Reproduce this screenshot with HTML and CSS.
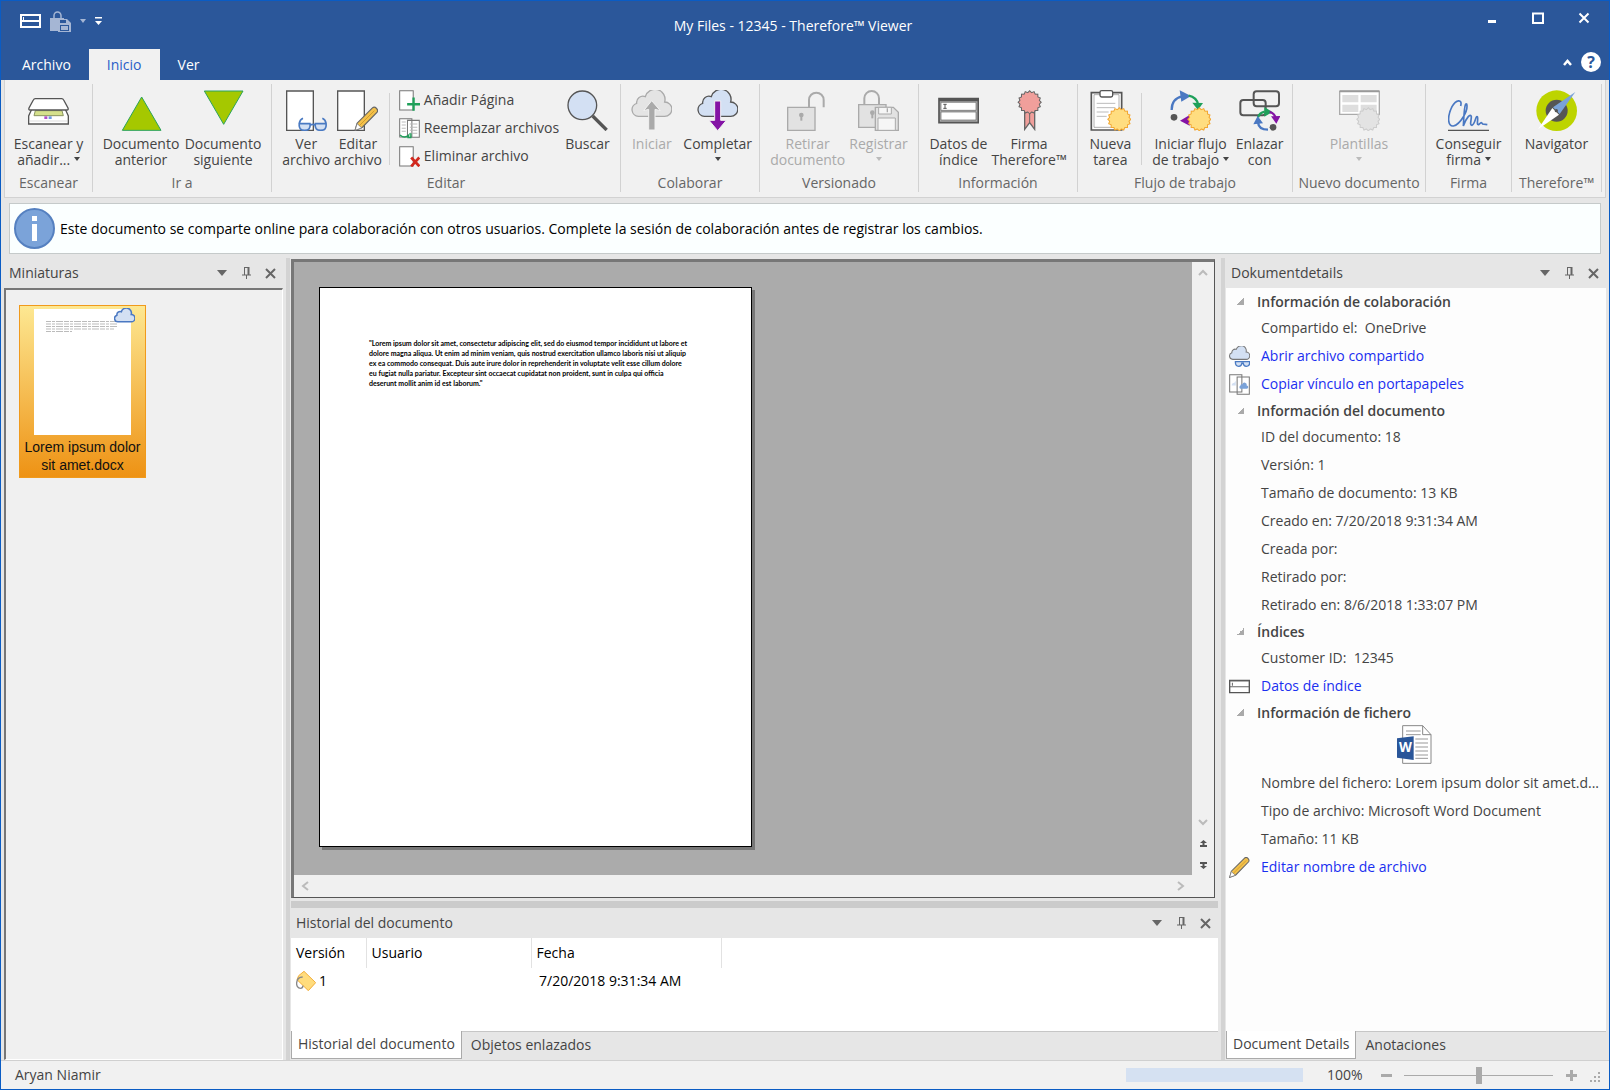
FILE: index.html
```
<!DOCTYPE html>
<html lang="es">

<head>
    <meta charset="UTF-8">
    <meta name="viewport" content="width=device-width, initial-scale=1.0">
    <title>My Files - 12345 - Therefore™ Viewer</title>

    <link rel="stylesheet" href="styles.css">
</head>

<body>
    <!-- Shared icon shapes -->
    <svg class="defs" aria-hidden="true">
        <defs>
            <g id="burst">
                <rect x="-23" y="-23" width="46" height="46" />
                <rect x="-23" y="-23" width="46" height="46" transform="rotate(22.5)" />
                <rect x="-23" y="-23" width="46" height="46" transform="rotate(45)" />
                <rect x="-23" y="-23" width="46" height="46" transform="rotate(67.5)" />
            </g>
            <path id="cloud" d="M22 79A20 20 0 0 1 17 40A19 19 0 0 1 43 20A30 30 0 0 1 101 36A21 21 0 0 1 101 79Z" />
            <g id="pencil">
                <path d="M2 60l5-18L46 3q5-4 10 1t2 10L20 53z" fill="#f3c14b" stroke="#666" stroke-width="3" />
                <path d="M2 60l5-17 12 11z" fill="#fff" stroke="#777" stroke-width="2" />
                <path d="M13 48L51 10" stroke="#c99322" stroke-width="2" />
            </g>
            <g id="pin" fill="none" stroke="#666">
                <path d="M3.500 0v8M3 .500h5M1 8h9M5.500 8v4" />
                <path d="M7.500 0v8" stroke-width="2" />
            </g>
            <path id="cross" d="M1 1l9 9M10 1l-9 9" fill="none" stroke="#666" stroke-width="2" />
        </defs>
    </svg>

    <header class="titlebar">
        <div class="title-row">
            <div class="quick-access">
                <button class="plain" aria-label="Datos de índice">
                    <svg width="21" height="14" viewBox="0 0 21 14" fill="none" stroke="#fff">
                        <path d="M1 1h19v12H1zM1 7h19" stroke-width="2" />
                        <path d="M3.500 3v3" />
                    </svg>
                </button>
                <button class="plain" aria-label="Registrar">
                    <svg width="21" height="21" viewBox="0 0 21 21" fill="#a5b6d4">
                        <path d="M4 7V4.500a3.500 3.500 0 0 1 7 0V7" fill="none" stroke="#a5b6d4" stroke-width="1.500" />
                        <path d="M0 7h14v2H8v11H0z" />
                        <path d="M8 8h9l4 4v9H8z" />
                        <path d="M10 9h6v3h-6zM10 14h9v6h-9z" fill="#2b579a" />
                        <path d="M11 15h7v4h-7z" />
                    </svg>
                </button>
                <button class="plain" aria-label="Opciones de registro"><span class="caret pale"></span></button>
                <button class="plain" aria-label="Personalizar barra">
                    <svg width="7" height="8" viewBox="0 0 7 8" fill="#fff">
                        <path d="M0 0h7v1.500H0zM0 4h7L3.500 8z" />
                    </svg>
                </button>
            </div>
            <h1>My Files - 12345 - Therefore™ Viewer</h1>
            <div class="window-buttons">
                <button class="plain" aria-label="Minimizar">
                    <svg width="12" height="12" viewBox="0 0 12 12"><path d="M2 8h8v3H2z" fill="#fff" /></svg>
                </button>
                <button class="plain" aria-label="Maximizar">
                    <svg width="12" height="12" viewBox="0 0 12 12"><path d="M1 1.500h10v9.500H1z" fill="none" stroke="#fff" stroke-width="2" /></svg>
                </button>
                <button class="plain" aria-label="Cerrar">
                    <svg width="12" height="12" viewBox="0 0 12 12"><path d="M1.500 1.500l9 9M10.500 1.500l-9 9" stroke="#fff" stroke-width="2" /></svg>
                </button>
            </div>
        </div>
        <nav class="ribbon-tabs">
            <button>Archivo</button>
            <button class="active">Inicio</button>
            <button>Ver</button>
            <div class="ribbon-help">
                <button class="plain" aria-label="Contraer cinta">
                    <svg width="9" height="7" viewBox="0 0 9 7"><path d="M1 6l3.500-4L8 6" fill="none" stroke="#fff" stroke-width="2.500" /></svg>
                </button>
                <button class="help">?</button>
            </div>
        </nav>
    </header>

    <section class="ribbon">
        <div class="group group-scan">
            <div class="group-body">
                <button class="tool">
                    <svg viewBox="0 0 123 123" fill="#fff" stroke="#555" stroke-width="4">
                        <path d="M11 58L2 78v24h119V78l-9-20z" />
                        <path d="M22 62h80l4 15H18z" fill="#d5e08c" stroke="#8a9460" stroke-width="3" />
                        <path d="M22 26h79q4 0 6 4l13 24q2 6-3 6H6q-5 0-3-6l13-24q2-4 6-4z" />
                        <path d="M3 93h117" stroke="#ccc" stroke-width="2" />
                        <path d="M49 79h9v8h-9z" fill="#b04cc8" stroke="none" />
                        <path d="M62 79h9v8h-9z" fill="#6d9be0" stroke="none" />
                    </svg>
                    <span>Escanear y<br>añadir... <i class="caret"></i></span>
                </button>
            </div>
            <h2>Escanear</h2>
        </div>

        <div class="group group-goto">
            <div class="group-body">
                <button class="tool wide">
                    <svg viewBox="0 0 123 123"><path d="M62 21l58 100H4z" fill="#a5c800" stroke="#2ba35c" stroke-width="3" /></svg>
                    <span>Documento<br>anterior</span>
                </button>
                <button class="tool wide">
                    <svg viewBox="0 0 123 123"><path d="M62 103L4 3h116z" fill="#a5c800" stroke="#2ba35c" stroke-width="3" /></svg>
                    <span>Documento<br>siguiente</span>
                </button>
            </div>
            <h2>Ir a</h2>
        </div>

        <div class="group group-edit">
            <div class="group-body">
                <button class="tool">
                    <svg viewBox="0 0 123 123">
                        <path d="M2 3h80v118H2z" fill="#fff" stroke="#555" stroke-width="4" />
                        <g fill="#d3e0f3" stroke="#4a7ac2" stroke-width="5">
                            <path d="M51 85q-10 4-11 16M109 85q10 4 11 16M73 105q7-4 14 0" fill="none" />
                            <path d="M40 101h32q3 20-16 20t-16-20zM88 101h32q3 20-16 20t-16-20z" />
                        </g>
                    </svg>
                    <span>Ver<br>archivo</span>
                </button>
                <button class="tool">
                    <svg viewBox="0 0 123 123">
                        <path d="M2 3h80v118H2z" fill="#fff" stroke="#555" stroke-width="4" />
                        <use href="#pencil" transform="translate(52 50) scale(1.18)" />
                    </svg>
                    <span>Editar<br>archivo</span>
                </button>
                <div class="tool-separator"></div>
                <div class="tool-list">
                    <button>
                        <svg viewBox="0 0 62 62">
                            <path d="M2 2h40v57H2z" fill="#fff" stroke="#777" stroke-width="3" />
                            <path d="M43 22v39M24 42h38" stroke="#1fa05a" stroke-width="7" />
                        </svg>
                        Añadir Página
                    </button>
                    <button>
                        <svg viewBox="0 0 62 62">
                            <path d="M2 2h36v54H2zM25 7h35v50H25z" fill="#fff" stroke="#777" stroke-width="3" />
                            <path d="M8 12h12M8 21h12M8 30h12M8 39h12M32 18h22M32 27h22M32 36h22M32 45h22" stroke="#bbb" stroke-width="3" />
                            <path d="M3 50q14 12 26 0l-2 8h8V45" fill="none" stroke="#1fa05a" stroke-width="4" />
                        </svg>
                        Reemplazar archivos
                    </button>
                    <button>
                        <svg viewBox="0 0 62 62">
                            <path d="M2 2h40v57H2z" fill="#fff" stroke="#777" stroke-width="3" />
                            <path d="M36 34l24 26M60 34L36 60" stroke="#d2281e" stroke-width="8" />
                        </svg>
                        Eliminar archivo
                    </button>
                </div>
                <button class="tool">
                    <svg viewBox="0 0 123 123">
                        <path d="M77 78l42 42" stroke="#555" stroke-width="10" />
                        <circle cx="46" cy="46" r="43" fill="#d3e0f3" stroke="#555" stroke-width="4" />
                    </svg>
                    <span>Buscar</span>
                </button>
            </div>
            <h2>Editar</h2>
        </div>

        <div class="group group-share">
            <div class="group-body">
                <button class="tool" disabled>
                    <svg viewBox="0 0 123 123">
                        <use href="#cloud" fill="#e4e4e4" stroke="#aaa" stroke-width="4" />
                        <path d="M62 32l26 30-16-4v62H53V58l-15 4z" fill="#aaa" stroke="#f1f1f1" stroke-width="3" />
                    </svg>
                    <span>Iniciar</span>
                </button>
                <button class="tool">
                    <svg viewBox="0 0 123 123">
                        <use href="#cloud" fill="#d3e0f3" stroke="#555" stroke-width="4" />
                        <path d="M53 33h18v58h17l-26 31-26-31h17z" fill="#8413a5" stroke="#f1f1f1" stroke-width="3" />
                    </svg>
                    <span>Completar<br><i class="caret"></i></span>
                </button>
            </div>
            <h2>Colaborar</h2>
        </div>

        <div class="group group-version">
            <div class="group-body">
                <button class="tool" disabled>
                    <svg viewBox="0 0 123 123" fill="#e2e2e2" stroke="#aaa" stroke-width="4">
                        <path d="M2 52h82v69H2z" />
                        <path d="M66 52V30a22 22 0 0 1 44 0v22" fill="none" stroke-width="6" />
                        <path d="M43 76v16" stroke-width="6" />
                        <circle cx="43" cy="75" r="5" fill="#aaa" />
                    </svg>
                    <span>Retirar<br>documento</span>
                </button>
                <button class="tool" disabled>
                    <svg viewBox="0 0 123 123" fill="#e2e2e2" stroke="#aaa" stroke-width="4">
                        <path d="M2 44h82v68H2z" />
                        <path d="M19 44V25a22 22 0 0 1 44 0v19" fill="none" stroke-width="6" />
                        <path d="M43 69v16" stroke-width="6" />
                        <circle cx="43" cy="68" r="5" fill="#aaa" />
                        <path d="M52 52h54l15 15v54H52z" />
                        <path d="M62 52h38v20H62zM60 84h52v37H60z" fill="#f6f6f6" stroke-width="3" />
                        <path d="M88 55v12" />
                    </svg>
                    <span>Registrar<br><i class="caret"></i></span>
                </button>
            </div>
            <h2>Versionado</h2>
        </div>

        <div class="group group-info">
            <div class="group-body">
                <button class="tool">
                    <svg viewBox="0 0 123 123">
                        <path d="M3 26h118v72H3z" fill="#aaa" stroke="#555" stroke-width="5" />
                        <path d="M3 26h118v8H3z" fill="#555" />
                        <path d="M9 37h105v24H9zM9 66h105v24H9z" fill="#fff" stroke="#666" stroke-width="2" />
                        <path d="M16 43h10M16 55h10M21 43v12" stroke="#555" stroke-width="3" />
                    </svg>
                    <span>Datos de<br>índice</span>
                </button>
                <button class="tool">
                    <svg viewBox="0 0 123 123">
                        <path d="M47 62v56l15-20 15 20V62z" fill="#f09f9b" stroke="#666" stroke-width="4" />
                        <path d="M62 68v28" stroke="#666" stroke-width="3" />
                        <use href="#burst" transform="translate(62 37)" stroke="#666" stroke-width="6" />
                        <use href="#burst" transform="translate(62 37)" fill="#f09f9b" />
                    </svg>
                    <span>Firma<br>Therefore™</span>
                </button>
            </div>
            <h2>Información</h2>
        </div>

        <div class="group group-flow">
            <div class="group-body">
                <button class="tool">
                    <svg viewBox="0 0 123 123">
                        <path d="M4 8h91v112H4z" fill="#fff" stroke="#555" stroke-width="5" />
                        <path d="M12 14h75v98H12z" fill="#fff" stroke="#888" stroke-width="2" />
                        <rect x="30" y="2" width="38" height="19" rx="5" fill="#fff" stroke="#555" stroke-width="4" />
                        <path d="M20 40h56M20 53h56M20 66h36M20 79h30" stroke="#bbb" stroke-width="3" />
                        <use href="#burst" transform="translate(88 88)" stroke="#f2a733" stroke-width="6" />
                        <use href="#burst" transform="translate(88 88)" fill="#ffdd80" />
                    </svg>
                    <span>Nueva<br>tarea</span>
                </button>
                <div class="tool-separator"></div>
                <button class="tool">
                    <svg viewBox="0 0 123 123">
                        <path d="M5 60Q5 26 36 19" fill="none" stroke="#4a78c2" stroke-width="7" />
                        <path d="M29 1l34 17-29 17z" fill="#4a78c2" />
                        <path d="M56 17q24 5 28 26" fill="none" stroke="#1fa05a" stroke-width="7" />
                        <path d="M67 38l32 1-15 21z" fill="#1fa05a" />
                        <circle cx="12" cy="82" r="10" fill="#555" />
                        <path d="M30 92l29-17v32z" fill="#8413a5" />
                        <use href="#burst" transform="translate(88 88)" stroke="#f2a733" stroke-width="6" />
                        <use href="#burst" transform="translate(88 88)" fill="#ffdd80" />
                    </svg>
                    <span>Iniciar flujo<br>de trabajo <i class="caret"></i></span>
                </button>
                <button class="tool">
                    <svg viewBox="0 0 123 123">
                        <g fill="none" stroke="#555" stroke-width="6">
                            <rect x="44" y="4" width="76" height="45" rx="9" />
                            <rect x="4" y="30" width="76" height="46" rx="9" />
                        </g>
                        <path d="M57 82q4-13 20-17" fill="none" stroke="#1fa05a" stroke-width="7" />
                        <path d="M76 51l24 15-24 14z" fill="#1fa05a" />
                        <path d="M92 66q16 4 18 20" fill="none" stroke="#8413a5" stroke-width="7" />
                        <path d="M96 79l28-1-12 23z" fill="#8413a5" />
                        <path d="M87 119q-28 0-30-22" fill="none" stroke="#4a78c2" stroke-width="7" />
                        <path d="M43 103l13-25 16 22z" fill="#4a78c2" />
                        <circle cx="102" cy="112" r="10" fill="#555" />
                    </svg>
                    <span>Enlazar<br>con</span>
                </button>
            </div>
            <h2>Flujo de trabajo</h2>
        </div>

        <div class="group group-new">
            <div class="group-body">
                <button class="tool" disabled>
                    <svg viewBox="0 0 123 123">
                        <path d="M2 4h119v69H2z" fill="#fff" stroke="#aaa" stroke-width="4" />
                        <path d="M2 4h119" stroke="#999" stroke-width="6" />
                        <path d="M10 15h48v22H10zM65 15h48v22H65zM10 44h48v22H10zM65 44h48v22H65z" fill="#dedede" />
                        <use href="#burst" transform="translate(88 88)" stroke="#ccc" stroke-width="6" />
                        <use href="#burst" transform="translate(88 88)" fill="#e3e3e3" />
                    </svg>
                    <span>Plantillas<br><i class="caret"></i></span>
                </button>
            </div>
            <h2>Nuevo documento</h2>
        </div>

        <div class="group group-sign">
            <div class="group-body">
                <button class="tool">
                    <svg viewBox="0 0 123 123" fill="none">
                        <path d="M38 48C44 26 24 28 12 50C-4 82 0 110 16 108C36 104 62 62 56 42C50 36 48 70 46 108C54 84 68 68 70 80C70 92 64 106 72 106C82 102 82 78 88 80C92 84 84 106 92 104C100 96 100 96 104 102L118 104" stroke="#4a78c2" stroke-width="5" />
                        <path d="M0 121h123" stroke="#555" stroke-width="4" />
                    </svg>
                    <span>Conseguir<br>firma <i class="caret"></i></span>
                </button>
            </div>
            <h2>Firma</h2>
        </div>

        <div class="group group-navigator">
            <div class="group-body">
                <button class="tool">
                    <svg viewBox="0 0 123 123">
                        <circle cx="62" cy="62" r="61" fill="#bdd400" />
                        <circle cx="62" cy="62" r="33" fill="#555" />
                        <path d="M6 118l43-64 20 20z" fill="#fff" />
                        <path d="M118 6L51 52l20 20z" fill="#7aa2d8" />
                        <circle cx="61" cy="62" r="5" fill="#555" />
                    </svg>
                    <span>Navigator</span>
                </button>
            </div>
            <h2>Therefore™</h2>
        </div>
    </section>

    <div class="notice" role="status">
        <svg width="41" height="41" viewBox="0 0 41 41">
            <circle cx="20.500" cy="20.500" r="19.500" fill="#7ba3d9" stroke="#5580c0" stroke-width="2" />
            <path d="M18 8h5v5h-5zM18 16h5v17h-5z" fill="#fff" />
        </svg>
        <p>Este documento se comparte online para colaboración con otros usuarios. Complete la sesión de colaboración antes de registrar los cambios.</p>
    </div>

    <main>
        <aside class="panel thumbnails">
            <div class="panel-header">
                <h2>Miniaturas</h2>
                <button class="plain" aria-label="Menú"><span class="arrow"></span></button>
                <button class="plain" aria-label="Fijar"><svg width="11" height="12" viewBox="0 0 11 12"><use href="#pin" /></svg></button>
                <button class="plain" aria-label="Cerrar"><svg width="11" height="11" viewBox="0 0 11 11"><use href="#cross" /></svg></button>
            </div>
            <div class="thumb-list">
                <figure class="thumb">
                    <div class="thumb-page">
                        <svg class="thumb-text" width="74" height="14" viewBox="0 0 74 14" fill="none" stroke="#bbb" stroke-dasharray="5 1 3 1 7 1">
                            <path d="M1 1.500h72M1 4h72M1 6.500h71" />
                            <path d="M1 9h68M1 11.500h26" />
                        </svg>
                    </div>
                    <svg class="thumb-cloud" width="21" height="16" viewBox="0 0 123 90"><use href="#cloud" fill="#d3e0f3" stroke="#4a78c2" stroke-width="9" /></svg>
                    <figcaption>Lorem ipsum dolor<br>sit amet.docx</figcaption>
                </figure>
            </div>
        </aside>

        <div class="splitter"></div>

        <div class="center">
            <section class="viewer">
                <div class="canvas">
                    <article class="page">
                        <p>"Lorem ipsum dolor sit amet, consectetur adipiscing elit, sed do eiusmod tempor incididunt ut labore et<br>
                            dolore magna aliqua. Ut enim ad minim veniam, quis nostrud exercitation ullamco laboris nisi ut aliquip<br>
                            ex ea commodo consequat. Duis aute irure dolor in reprehenderit in voluptate velit esse cillum dolore<br>
                            eu fugiat nulla pariatur. Excepteur sint occaecat cupidatat non proident, sunt in culpa qui officia<br>
                            deserunt mollit anim id est laborum."</p>
                    </article>
                </div>
                <div class="scroll-y">
                    <button class="plain" aria-label="Arriba"><svg width="10" height="7" viewBox="0 0 10 7"><path d="M1 6l4-4 4 4" fill="none" stroke="#bbb" stroke-width="2" /></svg></button>
                    <button class="plain push" aria-label="Abajo"><svg width="10" height="7" viewBox="0 0 10 7"><path d="M1 1l4 4 4-4" fill="none" stroke="#bbb" stroke-width="2" /></svg></button>
                    <button class="plain" aria-label="Página anterior"><svg width="7" height="8" viewBox="0 0 7 8"><path d="M3.500 0L7 3H4.500v2H7v2H0V5h2.500V3H0z" fill="#555" /></svg></button>
                    <button class="plain" aria-label="Página siguiente"><svg width="7" height="8" viewBox="0 0 7 8"><path d="M3.500 8L7 5H4.500V3H7V1H0v2h2.500v2H0z" fill="#555" /></svg></button>
                </div>
                <div class="scroll-x">
                    <button class="plain" aria-label="Izquierda"><svg width="8" height="10" viewBox="0 0 8 10"><path d="M7 1L2 5l5 4" fill="none" stroke="#bbb" stroke-width="2" /></svg></button>
                    <button class="plain" aria-label="Derecha"><svg width="8" height="10" viewBox="0 0 8 10"><path d="M1 1l5 4-5 4" fill="none" stroke="#bbb" stroke-width="2" /></svg></button>
                </div>
            </section>

            <section class="history">
                <div class="panel-header">
                    <h2>Historial del documento</h2>
                    <button class="plain" aria-label="Menú"><span class="arrow"></span></button>
                    <button class="plain" aria-label="Fijar"><svg width="11" height="12" viewBox="0 0 11 12"><use href="#pin" /></svg></button>
                    <button class="plain" aria-label="Cerrar"><svg width="11" height="11" viewBox="0 0 11 11"><use href="#cross" /></svg></button>
                </div>
                <div class="history-body">
                    <table>
                        <thead>
                            <tr>
                                <th class="col-version">Versión</th>
                                <th class="col-user">Usuario</th>
                                <th class="col-date">Fecha</th>
                            </tr>
                        </thead>
                        <tbody>
                            <tr>
                                <td>
                                    <span class="version">
                                        <svg width="20" height="20" viewBox="0 0 60 60">
                                            <path d="M24 1L59 35 37 59 3 26 8 14z" fill="#ffdc7d" stroke="#f2ae3c" stroke-width="3" />
                                            <path d="M20 18C-2 18-4 52 14 52q6 0 7-8" fill="none" stroke="#888" stroke-width="4" />
                                        </svg>
                                        1
                                    </span>
                                </td>
                                <td></td>
                                <td class="date">7/20/2018 9:31:34 AM</td>
                            </tr>
                        </tbody>
                    </table>
                </div>
                <div class="panel-tabs">
                    <button class="active">Historial del documento</button>
                    <button>Objetos enlazados</button>
                </div>
            </section>
        </div>

        <div class="splitter"></div>

        <aside class="panel details">
            <div class="panel-header">
                <h2>Dokumentdetails</h2>
                <button class="plain" aria-label="Menú"><span class="arrow"></span></button>
                <button class="plain" aria-label="Fijar"><svg width="11" height="12" viewBox="0 0 11 12"><use href="#pin" /></svg></button>
                <button class="plain" aria-label="Cerrar"><svg width="11" height="11" viewBox="0 0 11 11"><use href="#cross" /></svg></button>
            </div>
            <div class="details-body">
                <h3>Información de colaboración</h3>
                <ul>
                    <li>Compartido el:&nbsp; OneDrive</li>
                    <li class="action">
                        <svg viewBox="0 0 62 62">
                            <use href="#cloud" transform="scale(.5)" fill="#d3e0f3" stroke="#777" stroke-width="6" />
                            <path d="M19 46h42q1 14-10 14-8 0-9-9h-4q-1 9-9 9-11 0-10-14z" fill="#d3e0f3" stroke="#4a7ac2" stroke-width="4" />
                        </svg>
                        <a href="#">Abrir archivo compartido</a>
                    </li>
                    <li class="action">
                        <svg viewBox="0 0 62 62">
                            <path d="M2 2h36v51H2zM24 9h36v51H24z" fill="#fff" stroke="#777" stroke-width="3" />
                            <path d="M8 34q0-8 8-8l4-6v14z" fill="#d3e0f3" />
                            <use href="#cloud" transform="translate(30 26) scale(.22)" fill="#7aa2d8" />
                        </svg>
                        <a href="#">Copiar vínculo en portapapeles</a>
                    </li>
                </ul>
                <h3>Información del documento</h3>
                <ul>
                    <li>ID del documento: 18</li>
                    <li>Versión: 1</li>
                    <li>Tamaño de documento: 13 KB</li>
                    <li>Creado en: 7/20/2018 9:31:34 AM</li>
                    <li>Creada por:</li>
                    <li>Retirado por:</li>
                    <li>Retirado en: 8/6/2018 1:33:07 PM</li>
                </ul>
                <h3>Índices</h3>
                <ul>
                    <li>Customer ID:&nbsp; 12345</li>
                    <li class="action">
                        <svg viewBox="0 0 62 62">
                            <path d="M2 13h58v36H2z" fill="#fff" stroke="#555" stroke-width="4" />
                            <path d="M2 15h58M2 32h58M10 20v9" stroke="#666" stroke-width="3" />
                        </svg>
                        <a href="#">Datos de índice</a>
                    </li>
                </ul>
                <h3>Información de fichero</h3>
                <div class="file-icon">
                    <svg width="36" height="40" viewBox="0 0 108 120" role="img" aria-label="Word">
                        <path d="M20 2h60l25 27v86H20z" fill="#fff" stroke="#888" stroke-width="3" />
                        <path d="M80 2v27h25" fill="none" stroke="#888" stroke-width="3" />
                        <path d="M30 18h44M30 29h44M58 42h38M58 54h38M58 66h38M58 78h38M58 90h38M58 100h38" stroke="#999" stroke-width="3" />
                        <path d="M3 40l50-6v71L3 98z" fill="#2a5699" />
                        <text x="28" y="82" class="word-mark">W</text>
                    </svg>
                </div>
                <ul>
                    <li>Nombre del fichero: Lorem ipsum dolor sit amet.d...</li>
                    <li>Tipo de archivo: Microsoft Word Document</li>
                    <li>Tamaño: 11 KB</li>
                    <li class="action">
                        <svg viewBox="0 0 62 62"><use href="#pencil" /></svg>
                        <a href="#">Editar nombre de archivo</a>
                    </li>
                </ul>
            </div>
            <div class="panel-tabs">
                <button class="active">Document Details</button>
                <button>Anotaciones</button>
            </div>
        </aside>
    </main>

    <footer class="statusbar">
        <span class="user">Aryan Niamir</span>
        <div class="progress"></div>
        <label for="zoom">100%</label>
        <button class="plain" aria-label="Alejar"><svg width="11" height="11" viewBox="0 0 11 11"><path d="M0 4h11v3H0z" fill="#aaa" /></svg></button>
        <input type="range" id="zoom" min="0" max="200" value="100">
        <button class="plain" aria-label="Acercar"><svg width="11" height="11" viewBox="0 0 11 11"><path d="M0 4h11v3H0zM4 0h3v11H4z" fill="#aaa" /></svg></button>
        <svg class="grip" width="11" height="11" viewBox="0 0 11 11" fill="#aaa"><path d="M8 0h2v2H8zM4 4h2v2H4zM8 4h2v2H8zM0 8h2v2H0zM4 8h2v2H4zM8 8h2v2H8z" /></svg>
    </footer>
</body>

</html>
```
FILE: styles.css
```
* {
    box-sizing: border-box;
}

body {
    margin: 0;
    min-height: 100vh;
    display: flex;
    flex-direction: column;
    border: 1px solid #0a5cc4;
    background-color: #e6e6e6;
    color: #444;
    font-family: "Open Sans", "Noto Sans", sans-serif;
    font-size: 14px;
    line-height: 16px;
}

h1,
h2,
h3,
p,
ul,
figure {
    margin: 0;
    padding: 0;
    font-size: 14px;
    font-weight: normal;
}

button {
    margin: 0;
    padding: 0;
    border: none;
    background: none;
    color: inherit;
    font: inherit;
    cursor: pointer;
}

svg {
    display: block;
    flex: none;
}

.defs {
    position: absolute;
    width: 0;
    height: 0;
}

.plain {
    display: flex;
    align-items: center;
    justify-content: center;
}

.caret {
    display: inline-block;
    border: 3px solid transparent;
    border-top: 4px solid #444;
    border-bottom: none;
    vertical-align: 4px;
}

.caret.pale {
    border-top-color: #a5b6d4;
}

/* Title bar */
.titlebar {
    background-color: #2b579a;
    color: white;
}

.title-row {
    display: grid;
    grid-template-columns: 1fr auto 1fr;
    height: 48px;
}

.title-row h1 {
    padding: 17px 24px 0 0;
}

.quick-access {
    display: flex;
    align-items: center;
    gap: 9px;
    height: 40px;
    padding-left: 19px;
}

.window-buttons {
    display: flex;
    justify-content: flex-end;
    height: 34px;
    padding-right: 2px;
}

.window-buttons button {
    width: 46px;
}

.ribbon-tabs {
    display: flex;
    height: 31px;
}

.ribbon-tabs > button {
    padding: 0 18px;
}

.ribbon-tabs > button:first-child {
    padding-left: 21px;
}

.ribbon-tabs .active {
    background-color: #f1f1f1;
    color: #2a5fc8;
}

.ribbon-help {
    display: flex;
    align-items: center;
    gap: 9px;
    margin-left: auto;
    padding: 0 8px 5px 0;
}

.help {
    width: 20px;
    height: 20px;
    border-radius: 50%;
    background-color: white;
    color: #2b579a;
    font-weight: bold;
    font-size: 16px;
    line-height: 20px;
}

/* Ribbon */
.ribbon {
    display: flex;
    margin: 0 3px;
    padding: 4px 0 5px;
    border: solid #d2d2d2;
    border-width: 0 1px 1px;
    background-color: #f1f1f1;
}

.group {
    display: flex;
    flex-direction: column;
    flex: none;
    border-right: 1px solid #d2d2d2;
}

.group-body {
    display: flex;
    justify-content: center;
    height: 90px;
}

.group h2 {
    line-height: 18px;
    color: #666;
    text-align: center;
    white-space: nowrap;
}

.group-scan {
    width: 88px;
}

.group-goto {
    width: 179px;
}

.group-edit {
    width: 349px;
}

.group-share {
    width: 139px;
}

.group-share .group-body {
    justify-content: flex-end;
    gap: 7px;
    padding-right: 5px;
}

.group-version,
.group-info {
    width: 159px;
}

.group-flow {
    width: 215px;
}

.group-flow .group-body {
    gap: 3px;
    padding-left: 3px;
}

.group-new {
    width: 133px;
}

.group-sign {
    width: 86px;
}

.group-navigator {
    width: 90px;
}

.tool {
    display: flex;
    flex-direction: column;
    align-items: center;
    gap: 5px;
    padding: 6px 2px 0;
    white-space: nowrap;
}

.tool.wide {
    width: 82px;
}

.tool svg {
    width: 41px;
    height: 41px;
}

.tool:disabled {
    color: #aaa;
}

.tool:disabled .caret {
    border-top-color: #bbb;
}

.tool-separator {
    width: 1px;
    height: 72px;
    margin: 9px 5px 0;
    background-color: #d2d2d2;
}

.tool-list {
    padding-top: 2px;
    margin: 0 4px;
}

.tool-list button {
    display: flex;
    align-items: center;
    gap: 4px;
    height: 28px;
    white-space: nowrap;
}

.tool-list svg {
    width: 21px;
    height: 21px;
}

/* Notice bar */
.notice {
    display: flex;
    align-items: center;
    gap: 5px;
    height: 51px;
    margin: 5px 8px 4px;
    padding: 0 4px;
    border: 1px solid #c5caca;
    background-color: #fbffff;
    color: black;
}

/* Panels */
main {
    display: flex;
    flex: 1;
    padding: 0 3px;
}

.splitter {
    width: 4px;
    margin: 0 1px 0 3px;
    background-color: #d3d3d3;
}

.panel {
    display: flex;
    flex-direction: column;
    flex: none;
}

.panel-header {
    display: flex;
    align-items: center;
    height: 30px;
    padding: 0 1px 0 5px;
    background-color: #e6e6e6;
}

.panel-header h2 {
    flex: 1;
}

.panel-header .plain {
    width: 24px;
    height: 24px;
}

.arrow {
    border: 5px solid transparent;
    border-top: 6px solid #666;
    border-bottom: none;
}

.panel-tabs {
    display: flex;
    height: 29px;
    border-top: 1px solid #c6c6c6;
}

.panel-tabs button {
    height: 26px;
    padding: 0 9px;
}

.panel-tabs .active {
    margin-top: -1px;
    height: 28px;
    padding: 0 6px 2px;
    border: solid #aaa;
    border-width: 0 1px 1px;
    background-color: white;
}

.thumbnails {
    width: 279px;
}

.thumb-list {
    flex: 1;
    padding: 15px 13px;
    border: 2px solid #777;
    border-right: 1px solid #fff;
    border-bottom: 1px solid #fff;
    background-color: #f0f0f0;
}

.thumb {
    position: relative;
    width: 127px;
    padding: 3px 0;
    border: 1px solid #f09a1c;
    background-image: linear-gradient(#fde892, #ee9214);
    color: #111;
    font-family: "Liberation Sans", Arial, sans-serif;
    line-height: 18px;
    text-align: center;
}

.thumb-page {
    width: 97px;
    height: 126px;
    margin: 0 auto 3px;
    padding: 11px;
    background-color: white;
}

.thumb-cloud {
    position: absolute;
    top: 2px;
    right: 10px;
}

.center {
    display: flex;
    flex-direction: column;
    flex: 1;
    min-width: 0;
}

/* Document viewer */
.viewer {
    display: grid;
    grid-template-columns: 1fr 22px;
    grid-template-rows: 1fr 22px;
    flex: 1;
    margin: 1px 3px 3px 0;
    border: 3px solid #777;
    border-right: 1px solid #555;
    border-bottom: 1px solid #555;
    background-color: #f0f0f0;
}

.canvas {
    padding: 25px;
    background-color: #ababab;
}

.page {
    width: 433px;
    height: 560px;
    padding: 50px 49px;
    border: 1px solid black;
    background-color: white;
    box-shadow: 3px 3px 0 #777;
}

.page p {
    color: black;
    font-family: Lato, sans-serif;
    font-size: 7px;
    font-weight: bold;
    line-height: 10px;
    white-space: nowrap;
}

.scroll-y {
    display: flex;
    flex-direction: column;
}

.scroll-y button {
    height: 21px;
}

.push {
    margin-top: auto;
}

.scroll-x {
    display: flex;
    justify-content: space-between;
    padding: 0 2px;
}

.scroll-x button {
    width: 18px;
}

/* History */
.history {
    display: flex;
    flex-direction: column;
    height: 159px;
    border-top: 7px solid #cbcbcb;
}

.history-body {
    flex: 1;
    background-color: white;
    color: black;
}

.history table {
    border-collapse: collapse;
    table-layout: fixed;
}

.history th {
    height: 30px;
    padding: 0 5px;
    border-right: 1px solid #e2e2e2;
    font-weight: normal;
    text-align: left;
}

.history td {
    height: 26px;
    padding: 0 5px;
}

.col-version {
    width: 75px;
}

.col-user {
    width: 165px;
}

.col-date {
    width: 190px;
}

.history .date {
    padding-left: 8px;
}

.version {
    display: flex;
    align-items: center;
    gap: 3px;
}

/* Document details */
.details {
    width: 380px;
}

.details-body {
    flex: 1;
    padding-top: 1px;
    background-color: #fdfdfd;
}

.details h3 {
    display: flex;
    align-items: center;
    height: 25px;
    padding-left: 11px;
    font-weight: 600;
}

.details h3::before {
    content: "";
    width: 7px;
    height: 7px;
    margin-right: 13px;
    background: linear-gradient(135deg, transparent 50%, #aaa 50%);
}

.details ul {
    list-style: none;
}

.details li {
    height: 28px;
    padding-left: 35px;
    line-height: 28px;
    white-space: nowrap;
}

.details .action {
    display: flex;
    align-items: center;
    gap: 11px;
    padding-left: 3px;
}

.action svg {
    width: 21px;
    height: 21px;
}

.details a {
    color: #1a2ff0;
    text-decoration: none;
}

.file-icon {
    display: flex;
    justify-content: center;
    height: 44px;
    padding-right: 4px;
}

.word-mark {
    fill: white;
    font-size: 40px;
    font-weight: bold;
    text-anchor: middle;
}

/* Status bar */
.statusbar {
    display: flex;
    align-items: center;
    height: 29px;
    padding: 0 8px 0 14px;
    border-top: 1px solid #d0d0d0;
    background-color: #f1f1f1;
}

.progress {
    width: 177px;
    height: 14px;
    margin: 0 24px 0 auto;
    background-color: #d5e1f2;
}

.statusbar label {
    width: 54px;
}

#zoom {
    width: 149px;
    height: 18px;
    margin: 0 13px 0 12px;
    appearance: none;
    background: linear-gradient(#aaa, #aaa) center / 100% 1px no-repeat;
}

#zoom::-webkit-slider-thumb {
    appearance: none;
    width: 6px;
    height: 17px;
    background-color: #aaa;
}

.grip {
    margin: 5px 0 0 13px;
}
```
